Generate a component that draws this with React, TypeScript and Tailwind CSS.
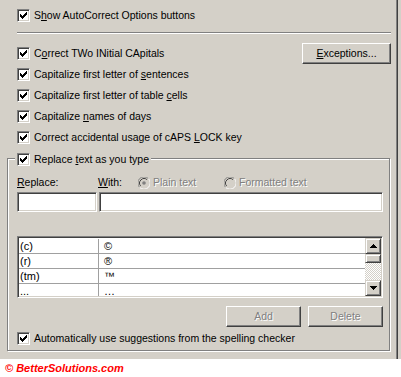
const raised =
  "border border-t-white border-l-white border-r-[#404040] border-b-[#404040] shadow-[inset_-1px_-1px_0_#808080] bg-[#d4d0c8]";
const sunken =
  "border border-t-[#808080] border-l-[#808080] border-r-white border-b-white shadow-[inset_1px_1px_0_#404040,inset_-1px_-1px_0_#d4d0c8]";
const scrollBtn =
  "border border-t-[#d4d0c8] border-l-[#d4d0c8] border-r-[#404040] border-b-[#404040] shadow-[inset_1px_1px_0_#fff,inset_-1px_-1px_0_#808080] bg-[#d4d0c8]";

function Check() {
  const cols = [2, 3, 4, 3, 2, 1, 0];
  return (
    <span className={`flex h-[13px] w-[13px] shrink-0 items-center justify-center bg-white ${sunken}`}>
      <svg width="7" height="7" viewBox="0 0 7 7" shapeRendering="crispEdges">
        {cols.map((y, x) => (
          <rect key={x} x={x} y={y} width="1" height="3" fill="#000" />
        ))}
      </svg>
    </span>
  );
}

function CheckRow({ children }: { children: React.ReactNode }) {
  return (
    <div className="flex h-[13px] items-center gap-[4px] leading-[13px]">
      <Check />
      <span className="whitespace-nowrap">{children}</span>
    </div>
  );
}

function Radio({ on }: { on?: boolean }) {
  return (
    <svg width="12" height="12" viewBox="0 0 12 12" className="shrink-0">
      <circle cx="6" cy="6" r="5" fill="#d4d0c8" />
      <path d="M10.39 1.61A5.5 5.5 0 0 0 1.61 10.39" stroke="#808080" fill="none" />
      <path d="M1.61 10.39A5.5 5.5 0 0 0 10.39 1.61" stroke="#fff" fill="none" />
      <path d="M9.18 2.82A4.5 4.5 0 0 0 2.82 9.18" stroke="#404040" fill="none" />
      <path d="M2.82 9.18A4.5 4.5 0 0 0 9.18 2.82" stroke="#d4d0c8" fill="none" />
      {on && <circle cx="6" cy="6" r="1.8" fill="#808080" />}
    </svg>
  );
}

function Arrow({ up }: { up?: boolean }) {
  return (
    <svg width="7" height="4" viewBox="0 0 7 4" shapeRendering="crispEdges">
      {[0, 1, 2, 3].map((i) => (
        <rect key={i} x={i} y={up ? 3 - i : i} width={7 - 2 * i} height="1" fill="#000" />
      ))}
    </svg>
  );
}

const entries = [
  ["(c)", "©"],
  ["(r)", "®"],
  ["(tm)", "™"],
  ["...", "…"],
];

export default function App() {
  return (
    <div className="h-[377px] w-[401px] overflow-hidden bg-white font-['Liberation_Sans',Arial,sans-serif] text-[10.5px] text-black">
      <div className="flex h-[359px] bg-[#d4d0c8]">
        <div className="w-[396px] pt-[9px]">
          <div className="ml-[17px]">
            <CheckRow>
              S<u>h</u>ow AutoCorrect Options buttons
            </CheckRow>
          </div>
          <div className="ml-[17px] mt-[10px] w-[374px] border-t border-b border-t-[#808080] border-b-white" />

          <div className="ml-[17px] mt-[13px] flex w-[374px] items-start">
            <div className="flex flex-col gap-[8px]">
              <CheckRow>
                C<u>o</u>rrect TWo INitial CApitals
              </CheckRow>
              <CheckRow>
                Capitalize first letter of <u>s</u>entences
              </CheckRow>
              <CheckRow>
                Capitalize first letter of table <u>c</u>ells
              </CheckRow>
              <CheckRow>
                Capitalize <u>n</u>ames of days
              </CheckRow>
              <CheckRow>
                Correct accidental usage of cAPS <u>L</u>OCK key
              </CheckRow>
            </div>
            <button className={`ml-auto -mt-[4px] flex h-[21px] w-[89px] items-center justify-center ${raised}`}>
              <u>E</u>xceptions...
            </button>
          </div>

          <div className="ml-[7px] mt-[14px] h-[193px] w-[383px] border border-[#808080] shadow-[inset_1px_1px_0_#fff,1px_1px_0_#fff]">
            <div className="-mt-[6px] ml-[7px] w-fit bg-[#d4d0c8] px-[2px]">
              <CheckRow>
                Replace <u>t</u>ext as you type
              </CheckRow>
            </div>

            <div className="ml-[9px] mt-[10px] flex h-[13px] items-center leading-[13px]">
              <span className="w-[81px]">
                <u>R</u>eplace:
              </span>
              <span className="w-[40px]">
                <u>W</u>ith:
              </span>
              <Radio on />
              <span className="ml-[3px] w-[71px] text-[#808080] [text-shadow:1px_1px_0_#fff]">Plain text</span>
              <Radio />
              <span className="ml-[3px] text-[#808080] [text-shadow:1px_1px_0_#fff]">Formatted text</span>
            </div>

            <div className="ml-[9px] mt-[3px] flex gap-[2px]">
              <div className={`h-[20px] w-[80px] bg-white ${sunken}`} />
              <div className={`h-[20px] w-[284px] bg-white ${sunken}`} />
            </div>

            <div className={`ml-[9px] mt-[24px] flex h-[62px] w-[366px] bg-white p-px ${sunken}`}>
              <div className="flex-1 overflow-hidden pt-px text-[11px]">
                {entries.map(([a, b]) => (
                  <div key={a} className="flex h-[15px] border-b border-[#a0a0a0] leading-[14px]">
                    <span className="w-[80px] border-r border-[#a0a0a0] pl-[1px]">{a}</span>
                    <span className="pl-[5px]">{b}</span>
                  </div>
                ))}
              </div>
              <div className="flex w-[16px] flex-col">
                <div className={`flex h-[16px] items-center justify-center ${scrollBtn}`}>
                  <Arrow up />
                </div>
                <div className={`h-[9px] ${scrollBtn}`} />
                <div className="flex-1 bg-[repeating-conic-gradient(#fff_0_25%,#d4d0c8_0_50%)] bg-[length:2px_2px]" />
                <div className={`flex h-[16px] items-center justify-center ${scrollBtn}`}>
                  <Arrow />
                </div>
              </div>
            </div>

            <div className="ml-[9px] mt-[8px] flex w-[366px] justify-end gap-[7px]">
              {["Add", "Delete"].map((t) => (
                <div
                  key={t}
                  className={`flex h-[21px] w-[75px] items-center justify-center text-[#808080] [text-shadow:1px_1px_0_#fff] ${raised}`}
                >
                  {t}
                </div>
              ))}
            </div>

            <div className="ml-[9px] mt-[5px]">
              <CheckRow>Automatically use suggestions from the spelling checker</CheckRow>
            </div>
          </div>
        </div>
        <div className="w-px bg-[#808080]" />
        <div className="w-px bg-[#404040]" />
      </div>
      <div className="h-[18px] pl-[5px] text-[11px] font-bold italic leading-[18px] text-[#ff0000]">
        © BetterSolutions.com
      </div>
    </div>
  );
}
